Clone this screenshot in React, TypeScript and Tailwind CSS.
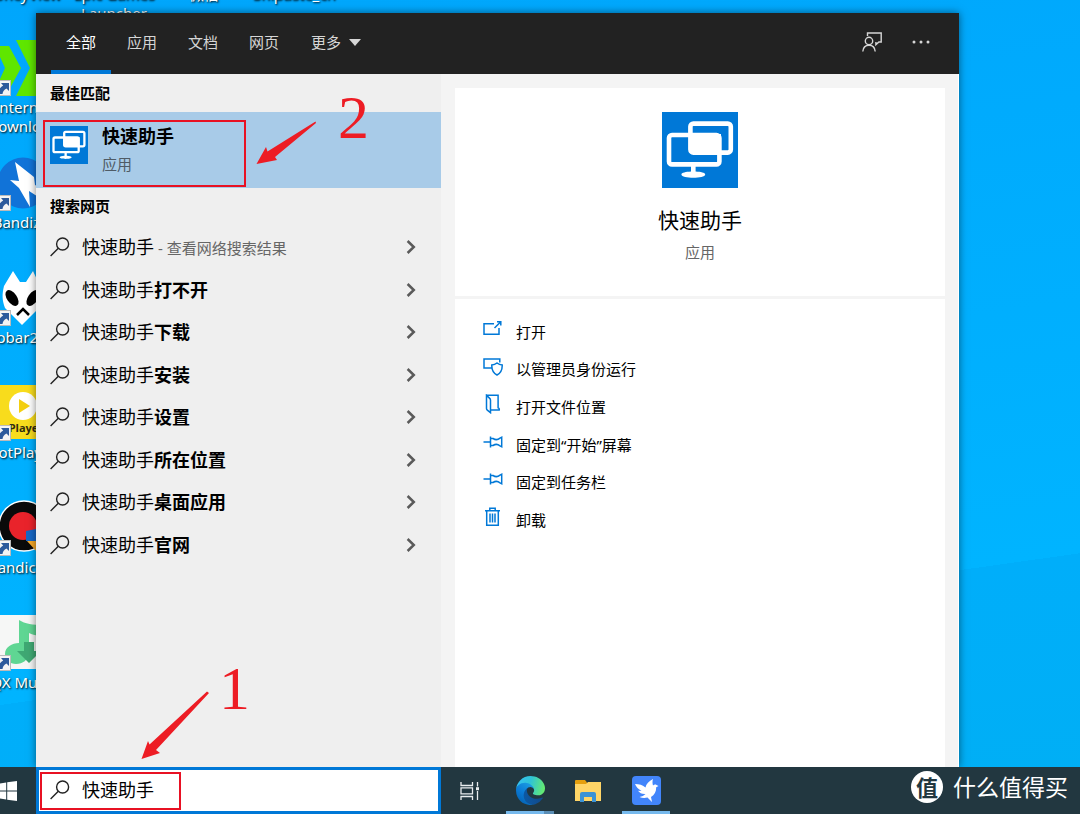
import { useState, type ReactNode } from "react";

const keyword = "快速助手";

const tabs = ["全部", "应用", "文档", "网页"];

const suggestions = ["", "打不开", "下载", "安装", "设置", "所在位置", "桌面应用", "官网"];

function SearchIcon() {
  return (
    <svg viewBox="0 0 20 20" className="h-5 w-5 shrink-0" fill="none" stroke="#222" strokeWidth="1.4" aria-hidden="true">
      <circle cx="12.6" cy="7" r="6" />
      <path d="M8.3 11.3.6 19" />
    </svg>
  );
}

function ChevronIcon() {
  return (
    <svg viewBox="0 0 10 14" className="h-3.5 w-2.5 shrink-0" fill="none" stroke="#5a5a5a" strokeWidth="2.5" aria-hidden="true">
      <path d="M1.6 1 7.8 7l-6.2 6" />
    </svg>
  );
}

function QuickAssistIcon({ className }: { className: string }) {
  return (
    <svg viewBox="0 0 76 76" className={className} aria-hidden="true">
      <rect width="76" height="76" fill="#0078d7" />
      <g fill="none" stroke="#fff" strokeWidth="4.6">
        <rect x="28.4" y="11.6" width="40.4" height="29" rx="3" />
        <rect x="7" y="23" width="50.4" height="29.4" rx="3" />
      </g>
      <path fill="#fff" d="M27 22h32v20H31q-4 0-4-4zM29 53h4.6v6.6c5 .3 9.6 1.2 9.6 3 0 2.200-6 3.200-11.900 3.200s-11.900-1-11.900-3.200c0-1.800 4.600-2.700 9.600-3z" />
    </svg>
  );
}

function ActionIcon({ children }: { children: ReactNode }) {
  return (
    <svg viewBox="0 0 20 20" className="h-5 w-5 shrink-0" fill="none" stroke="#0078d7" strokeWidth="1.5" aria-hidden="true">
      {children}
    </svg>
  );
}

const pinIcon = (
  <ActionIcon>
    <path d="M.5 10h7M7.500 4.500v11M7.500 6.500H10c2 1.300 5 1.300 7-.3l1.700-1v9.600l-1.700-1c-2-1.600-5-1.600-7-.3H7.500" />
  </ActionIcon>
);

const actions: { label: string; icon: ReactNode }[] = [
  {
    label: "打开",
    icon: (
      <ActionIcon>
        <path d="M11 4.700H1v10.600h15V9M11.500 9l6-6M14 2.700h3.800v3.800" />
      </ActionIcon>
    ),
  },
  {
    label: "以管理员身份运行",
    icon: (
      <ActionIcon>
        <path d="M8.500 12H1V3h15.800v3.500M14 7c1.600 1.300 3.200 1.900 5.200 2 .2 4.900-1.400 7.900-5.200 10-3.800-2.100-5.400-5.100-5.200-10 2-.1 3.600-.7 5.200-2z" />
      </ActionIcon>
    ),
  },
  {
    label: "打开文件位置",
    icon: (
      <ActionIcon>
        <path d="M3.500 1.200h11.600v12.500c1 .3 1.400 1 1.100 2.300H7.500M3.500 1.200l3.200 3.200c.5.500.8 1 .8 1.800v12.500l-3.200-2.500c-.5-.4-.8-.9-.8-1.600z" />
      </ActionIcon>
    ),
  },
  { label: "固定到“开始”屏幕", icon: pinIcon },
  { label: "固定到任务栏", icon: pinIcon },
  {
    label: "卸载",
    icon: (
      <ActionIcon>
        <path d="M2 3.700h15M6.800 3.500V1.200h5.400v2.300M3.700 4v14.300h11.600V4M7 6.500v9M9.500 6.500v9M12 6.500v9" />
      </ActionIcon>
    ),
  },
];

const shortcuts: { label: string; art: ReactNode }[] = [
  {
    label: "Internet Download",
    art: <path fill="#5fe600" d="M0 6h14l12 22-12 22H0l10-22zM21 0h35v56H21l14-28z" />,
  },
  {
    label: "Bandizip",
    art: (
      <>
        <circle cx="28" cy="28" r="25.500" fill="#1173d8" />
        <path fill="#fff" d="m20 7 19 15 1 8 8 4v11l-14-9 1 16L24 33l-9-8 9 1z" />
      </>
    ),
  },
  {
    label: "foobar2000",
    art: (
      <>
        <path fill="#fff" d="M18 1 9 16c-2 8-2 14 1 22l17 17 17-17c3-8 3-14 1-22L38 1l-7 11h-6z" />
        <ellipse cx="17" cy="28" rx="5" ry="9" transform="rotate(-35 17 28)" />
        <ellipse cx="38" cy="28" rx="5" ry="9" transform="rotate(35 38 28)" />
        <path d="m22 45 6-6 6 6" fill="none" stroke="#000" strokeWidth="2.500" />
      </>
    ),
  },
  {
    label: "PotPlayer",
    art: (
      <>
        <rect width="55" height="54" fill="#f8dc1c" />
        <circle cx="28" cy="21" r="14" fill="#fff" />
        <path fill="#f3cf10" d="m24 14 11 7-11 7z" />
        <text x="31" y="47" textAnchor="middle" fontSize="11" fontWeight="700" fill="#332c10" fontFamily="Open Sans, sans-serif">
          Player
        </text>
      </>
    ),
  },
  {
    label: "Bandicam",
    art: (
      <>
        <circle cx="29" cy="26" r="25" fill="#0a0a0a" stroke="#fff" strokeWidth="1.500" />
        <circle cx="28" cy="26" r="14" fill="#e9232b" />
        <path fill="#1668c8" d="m31 31 25-5v15H31z" />
        <path fill="#f7a928" d="M32 41h24v12H43z" />
      </>
    ),
  },
  {
    label: "QX Music",
    art: (
      <>
        <rect width="56" height="54" fill="#f6f7f6" />
        <path fill="#5fd693" d="M24 5c6 4 14 5 24 5v10c-6 1-10 0-14-2v20c-1 7-6 11-13 11-6 0-11-4-11-10 0-7 7-11 14-11z" />
        <path fill="#3fa873" d="M29 27h10v9h7L34 48 22 36h7z" />
      </>
    ),
  },
];

function Shortcut({ label, art }: { label: string; art: ReactNode }) {
  return (
    <div className="flex h-[115px] w-20 flex-col items-center gap-0.5">
      <div className="relative">
        <svg viewBox="0 0 56 56" className="h-14 w-14" aria-hidden="true">
          {art}
        </svg>
        <svg viewBox="0 0 16 16" className="absolute bottom-0 left-0 h-4 w-4" aria-hidden="true">
          <rect x=".5" y=".5" width="15" height="15" fill="#f4f4f4" stroke="#bbb" />
          <path fill="#2c5a9c" d="M6 3h8v8l-2.500-2.500C9 10 8 11 7.500 14H3c.2-4 2-6.500 5.200-8.500z" />
        </svg>
      </div>
      <span className="text-center text-[15px] leading-[19px] text-white [text-shadow:1px_1px_2px_#000]">{label}</span>
    </div>
  );
}

function Desktop() {
  return (
    <div className="absolute inset-0 bg-[linear-gradient(172deg,#00a6fc_0%,#00b4ff_73%,#00aefa_73%,#00aff4_100%)]">
      <div className="absolute -top-[15px] -left-5 flex text-[15px] leading-[19px] text-white [text-shadow:1px_1px_2px_#000]">
        <span className="w-[84px] text-center">HoneyView</span>
        <span className="w-[100px] text-center">
          Epic Games
          <br />
          Launcher
        </span>
        <span className="w-20 text-center">微信</span>
        <span className="w-[100px] text-center">Snipaste_cn</span>
      </div>
      <div className="absolute top-10 -left-[17px]">
        {shortcuts.map((item) => (
          <Shortcut key={item.label} {...item} />
        ))}
      </div>
    </div>
  );
}

function PanelHeader() {
  return (
    <header className="flex h-[61px] shrink-0 items-stretch bg-[#222] pl-[15px] text-[15px] text-[#d6d6d6]">
      <nav className="flex gap-px" aria-label="搜索范围">
        {tabs.map((tab, i) => (
          <button
            key={tab}
            type="button"
            className={
              i === 0
                ? "w-[60px] border-b-4 border-[#0078d7] pt-0.5 text-white"
                : "w-[60px] border-b-4 border-transparent pt-0.5"
            }
          >
            {tab}
          </button>
        ))}
        <button type="button" className="flex items-center gap-2 pb-0.5 pl-4">
          更多
          <svg viewBox="0 0 12 7" className="h-[7px] w-3" fill="currentColor" aria-hidden="true">
            <path d="M0 0h12L6 7z" />
          </svg>
        </button>
      </nav>
      <div className="mr-7 ml-auto flex items-center gap-[29px] pb-1">
        <button type="button" aria-label="反馈">
          <svg viewBox="0 0 20 20" className="h-5 w-5" fill="none" stroke="currentColor" strokeWidth="1.400" aria-hidden="true">
            <path d="M5.500 4V1h13.700v9h-2.300l-3 2.600V10" />
            <circle cx="7" cy="9" r="3.700" />
            <path d="M.8 19.500c.3-4 2.600-6.300 6.200-6.300s5.900 2.300 6.200 6.300" />
          </svg>
        </button>
        <button type="button" aria-label="选项">
          <svg viewBox="0 0 20 20" className="h-5 w-5" fill="currentColor" aria-hidden="true">
            <circle cx="3" cy="10" r="1.500" />
            <circle cx="10" cy="10" r="1.500" />
            <circle cx="17" cy="10" r="1.500" />
          </svg>
        </button>
      </div>
    </header>
  );
}

function ResultList() {
  return (
    <section className="relative w-[405px] shrink-0 bg-[#efefef]">
      <h2 className="flex h-[38px] items-center pl-3.5 text-[15px] font-bold">最佳匹配</h2>
      <button type="button" className="flex h-[76px] w-full items-start gap-3.5 bg-[#a8cbe8] pt-3.5 pl-3.5 text-left">
        <QuickAssistIcon className="h-[38px] w-[38px]" />
        <span className="flex flex-col gap-1">
          <span className="text-lg leading-5 font-bold">{keyword}</span>
          <span className="text-[15px] leading-7 text-[#4f5b66]">应用</span>
        </span>
      </button>
      <h2 className="flex h-[38px] items-center pb-0.5 pl-3.5 text-[15px] font-bold">搜索网页</h2>
      <ul className="grid h-[340px] auto-rows-fr">
        {suggestions.map((suffix) => (
          <li key={suffix} className="flex">
            <button type="button" className="flex flex-1 items-center gap-3 pr-[25px] pl-3.5 text-left text-lg">
              <SearchIcon />
              <span className="flex-1">
                {keyword}
                {suffix ? (
                  <b>{suffix}</b>
                ) : (
                  <span className="text-[15px] text-[#666]"> - 查看网络搜索结果</span>
                )}
              </span>
              <ChevronIcon />
            </button>
          </li>
        ))}
      </ul>

      {/* step 2 callout */}
      <div className="pointer-events-none absolute top-[46px] left-[7px] h-[67px] w-[203px] border-2 border-[#e81123]" />
      <svg viewBox="0 0 60 44" className="absolute top-[47px] left-[220px] h-11 w-[60px]" fill="#ed1c24" aria-hidden="true">
        <path d="M59.500.5 60 2 19 36l2 3L.5 43 10 26l1.500 4.500z" />
      </svg>
      <span className="absolute top-3 left-[302px] font-['Liberation_Serif',serif] text-[62px] leading-[62px] text-[#ed1c24]">
        2
      </span>

      {/* step 1 callout */}
      <svg viewBox="0 0 68 70" className="absolute bottom-[7px] left-[105px] h-[70px] w-[68px]" fill="#ed1c24" aria-hidden="true">
        <path d="M66 1.500 68 3 15 60l4 3L.5 69 7 51l1.500 3.500z" />
      </svg>
      <span className="absolute bottom-12 left-[183px] font-['Liberation_Serif',serif] text-[62px] leading-[62px] text-[#ed1c24]">
        1
      </span>
    </section>
  );
}

function DetailPane() {
  return (
    <section className="flex flex-1 flex-col gap-[3px] border-r border-white bg-[#f4f4f4] pt-3.5 pr-[13px] pl-3.5">
      <div className="flex h-52 flex-col items-center bg-white pt-6">
        <QuickAssistIcon className="h-[76px] w-[76px]" />
        <h1 className="mt-[18px] text-[21px] leading-7">{keyword}</h1>
        <p className="mt-1.5 text-[15px] leading-6 text-[#666]">应用</p>
      </div>
      <div className="flex-1 bg-white pt-3.5">
        <ul className="grid h-[226px] auto-rows-fr">
          {actions.map((action) => (
            <li key={action.label} className="flex">
              <button type="button" className="flex flex-1 items-center gap-[13px] pl-7 text-left text-[15px]">
                <span className="pb-1.5">{action.icon}</span>
                {action.label}
              </button>
            </li>
          ))}
        </ul>
      </div>
    </section>
  );
}

function EdgeIcon() {
  return (
    <svg viewBox="0 0 256 256" className="h-[29px] w-[29px]" aria-hidden="true">
      <defs>
        <linearGradient id="edge-a" x1="60" y1="180" x2="235" y2="180" gradientUnits="userSpaceOnUse">
          <stop offset="0" stopColor="#0c59a4" />
          <stop offset="1" stopColor="#114a8b" />
        </linearGradient>
        <linearGradient id="edge-b" x1="150" y1="80" x2="50" y2="220" gradientUnits="userSpaceOnUse">
          <stop offset="0" stopColor="#1b9de2" />
          <stop offset=".6" stopColor="#0b7bd6" />
          <stop offset="1" stopColor="#0669bc" />
        </linearGradient>
        <linearGradient id="edge-c" x1="10" y1="60" x2="250" y2="120" gradientUnits="userSpaceOnUse">
          <stop offset="0" stopColor="#35c1f1" />
          <stop offset=".45" stopColor="#2fc3d6" />
          <stop offset="1" stopColor="#66eb6e" />
        </linearGradient>
      </defs>
      <path
        fill="url(#edge-a)"
        d="M231 190.500c-3.400 1.800-6.900 3.400-10.500 4.700a101.800 101.800 0 0 1-35.900 6.400c-47.300 0-88.500-32.500-88.500-74.300 0-11.400 6.400-21.900 16.400-27.300-42.800 1.800-53.800 46.400-53.800 72.500 0 73.900 68.100 81.400 82.800 81.400 7.900 0 19.800-2.300 27-4.600l1.300-.4a128.300 128.300 0 0 0 66.600-52.800 4 4 0 0 0-5.400-5.600z"
      />
      <path
        fill="url(#edge-b)"
        d="M105.700 241.400a79.200 79.200 0 0 1-22.700-21.300 80.700 80.700 0 0 1 29.500-120c3.200-1.500 8.500-4.100 15.600-4a32.400 32.400 0 0 1 25.700 13 31.900 31.900 0 0 1 6.300 18.700c0-.2 24.500-79.600-80-79.600-43.900 0-80 41.700-80 78.200a130.200 130.200 0 0 0 12.100 56 128 128 0 0 0 156.400 67 75.500 75.500 0 0 1-62.800-8z"
      />
      <path
        fill="url(#edge-c)"
        d="M152.300 148.900c-.8 1-3.300 2.500-3.300 5.700 0 2.600 1.700 5.200 4.800 7.300 14.400 10 41.500 8.700 41.600 8.700 10.700 0 21.100-2.900 30.300-8.300A61.400 61.400 0 0 0 256 109.200c.3-22.400-8-37.300-11.300-43.900C223.500 23.900 177.700 0 128 0A128 128 0 0 0 0 126.200c.5-36.500 36.800-66 80-66 3.500 0 23.500.3 42 10a72.600 72.600 0 0 1 30.900 29.300c6.100 10.600 7.200 24.100 7.200 29.500s-2.700 13.300-7.800 19.900z"
      />
    </svg>
  );
}

function Taskbar() {
  const [query, setQuery] = useState(keyword);

  return (
    <footer className="relative flex h-[47px] shrink-0 items-stretch bg-[#223740]">
      <button type="button" aria-label="开始" className="flex w-9 items-center overflow-hidden">
        <svg viewBox="0 0 20 20" className="-ml-[3px] h-5 w-5" fill="#fff" aria-hidden="true">
          <path d="M0 2.800 9.200 1.500v8H0zM10.200 1.300 20 0v9.500h-9.800zM0 10.500h9.200v8L0 17.200zM10.200 10.500H20V20l-9.800-1.300z" />
        </svg>
      </button>
      <label className="relative flex w-[405px] items-center gap-3 border-[3px] border-[#0078d7] bg-white pb-0.5 pl-[11px]">
        <SearchIcon />
        <input
          aria-label="搜索"
          value={query}
          onChange={(e) => setQuery(e.target.value)}
          className="min-w-0 flex-1 bg-transparent text-lg outline-none"
        />
        <span className="pointer-events-none absolute top-0.5 left-px h-[38px] w-[141px] border-2 border-[#e81123]" />
      </label>
      <div className="ml-0.5 flex gap-2.5">
        <button type="button" aria-label="任务视图" className="flex w-[53px] items-center justify-center">
          <svg viewBox="0 0 20 20" className="h-5 w-5" fill="none" stroke="#e8ecee" strokeWidth="1.300" aria-hidden="true">
            <path d="M1 1v3.500h11.500V1M1 6.800h11.500v6H1zM1 19v-3.500h11.500V19M17.500 1v4.500M17.500 10v9" />
            <path d="M16 6.200h3v3h-3z" fill="#e8ecee" stroke="none" />
          </svg>
        </button>
        <button type="button" aria-label="Edge" className="relative flex w-12 items-center justify-center">
          <EdgeIcon />
          <span className="absolute inset-x-0 bottom-0 h-[3px] border-r-10 border-[#5a8db5] bg-[#76b9ed]" />
        </button>
        <button type="button" aria-label="文件资源管理器" className="flex w-12 items-center justify-center">
          <svg viewBox="0 0 26 22" className="h-[22px] w-[26px]" aria-hidden="true">
            <path fill="#e59f0e" d="M0 1q0-1 1-1h9l2 2.500V6H0z" />
            <path fill="#ffd567" d="M0 4h11l2-2h13v19H0z" />
            <path fill="#3b93d6" d="M5 22v-8q0-2 2-2h12q2 0 2 2v8h-4v-5H9v5z" />
          </svg>
        </button>
        <button type="button" aria-label="迅雷" className="relative flex w-12 items-center justify-center">
          <svg viewBox="0 0 29 29" className="h-[29px] w-[29px]" aria-hidden="true">
            <rect width="29" height="29" rx="4" fill="#4285fb" />
            <path fill="#fff" d="M3 8c4 0 8 1 10.500 3.500C14 8 17 5 21 3c-.8 2.500-.5 4.500 0 6.500 1-1 2.500-1.300 3.500-.5l2 1-2.300 1.200c0 4.500-1.700 7.800-5.200 9.800L20 26l-4.500-4.500c-3 .8-5.500.5-8-.5 2.500-.5 4.500-1.500 6-3-3.500.2-6-1-7.500-3.200l3.500.2C6.500 13 4 11 3 8z" />
          </svg>
          <span className="absolute inset-x-0 bottom-0 h-[3px] bg-[#76b9ed]" />
        </button>
      </div>
      <div className="mr-3 ml-auto flex items-center gap-2.5 pb-2 text-white">
        <span className="flex h-8 w-8 items-center justify-center rounded-full bg-white text-[22px] leading-8 text-[#223740]">
          <b>值</b>
        </span>
        <span className="text-[23px] leading-8">什么值得买</span>
      </div>
    </footer>
  );
}

export default function App() {
  return (
    <div className="relative flex h-screen flex-col overflow-hidden font-['Noto_Sans','Noto_Sans_CJK_SC',sans-serif] text-black">
      <Desktop />
      <main className="relative mt-[13px] mr-[121px] ml-9 flex flex-1 flex-col shadow-[0_0_8px_rgba(0,0,0,0.5)]">
        <PanelHeader />
        <div className="flex flex-1">
          <ResultList />
          <DetailPane />
        </div>
      </main>
      <Taskbar />
    </div>
  );
}
